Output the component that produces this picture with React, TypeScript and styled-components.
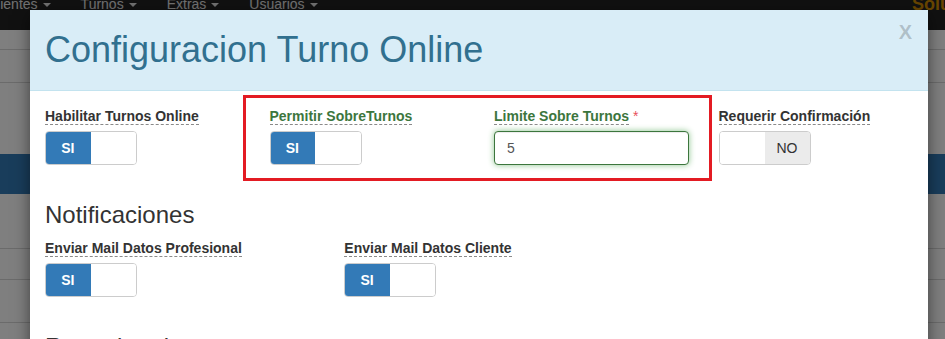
import React from "react";
import styled, { createGlobalStyle } from "styled-components";

const Global = createGlobalStyle`
  html, body { margin: 0; padding: 0; }
  body {
    width: 945px;
    height: 339px;
    overflow: hidden;
    background: #fff;
    font-family: "Liberation Sans", Arial, sans-serif;
    font-size: 14px;
    color: #333;
  }
  * { box-sizing: border-box; }
`;

const Stage = styled.div`
  position: relative;
  width: 945px;
  height: 339px;
  overflow: hidden;
`;

/* ---------- page beneath the modal ---------- */
const Navbar = styled.nav`
  display: flex;
  align-items: flex-start;
  height: 50px;
  margin-top: -20px;
  background: #222;
`;

const NavList = styled.ul`
  display: flex;
  list-style: none;
  margin: 0 0 0 -28px;
  padding: 0;
`;

const NavLink = styled.li`
  padding: 14px 15px 0;
  line-height: 20px;
  font-size: 14px;
  color: #e2e2e2;
  white-space: nowrap;
`;

const Caret = styled.span`
  display: inline-block;
  width: 0;
  height: 0;
  margin-left: 5px;
  vertical-align: middle;
  border-top: 4px solid;
  border-left: 4px solid transparent;
  border-right: 4px solid transparent;
`;

const Brand = styled.div`
  margin-left: auto;
  width: 33px;
  overflow: hidden;
  white-space: nowrap;
  padding-top: 14px;
  line-height: 20px;
  font-size: 18px;
  font-weight: 700;
  color: #d08a00;
`;

const Band = styled.div<{ $h: number; $bg?: string; $line?: boolean }>`
  height: ${(p) => p.$h}px;
  background: ${(p) => p.$bg ?? "#fff"};
  border-bottom: ${(p) => (p.$line ? "1px solid #d6d6d6" : "none")};
`;

const Backdrop = styled.div`
  position: absolute;
  inset: 0;
  background: rgba(0, 0, 0, 0.5);
`;

/* ---------- modal ---------- */
const Modal = styled.div`
  position: absolute;
  left: 30px;
  top: 10px;
  width: 898px;
  height: 400px;
  background: #fff;
  box-shadow: 0 5px 15px rgba(0, 0, 0, 0.5);
`;

const Header = styled.div`
  display: flex;
  justify-content: space-between;
  align-items: flex-start;
  padding: 20px 16px 20px 15px;
  background: #d9edf7;
  border-bottom: 1px solid #c3e3ef;
`;

const Title = styled.h1`
  margin: 0;
  font-size: 36px;
  line-height: 40px;
  font-weight: 400;
  color: #31708f;
`;

const Close = styled.span`
  margin-top: -8px;
  font-size: 20px;
  line-height: 21px;
  font-weight: 700;
  color: rgba(0, 0, 0, 0.2);
`;

const Body = styled.div`
  padding: 15px;
`;

const Row = styled.div<{ $cols: number }>`
  position: relative;
  display: grid;
  grid-template-columns: repeat(${(p) => p.$cols}, 1fr);
  margin: 0 -15px;
  padding-bottom: 15px;
`;

const Col = styled.div`
  padding: 0 15px;
`;

const Label = styled.label<{ $success?: boolean }>`
  display: block;
  margin-bottom: 5px;
  font-size: 14px;
  line-height: 20px;
  font-weight: 700;
  color: ${(p) => (p.$success ? "#3c763d" : "#333")};
`;

const Hint = styled.span`
  border-bottom: 1px dashed #8a8a8a;
`;

const Required = styled.span`
  color: #e8505b;
  font-weight: 400;
`;

const Toggle = styled.div`
  display: flex;
  width: 92px;
  height: 34px;
  border: 1px solid #ccc;
  border-radius: 4px;
  overflow: hidden;
`;

const ToggleHalf = styled.div<{ $kind: "on" | "off" | "handle" }>`
  flex: 1;
  display: flex;
  align-items: center;
  justify-content: center;
  font-size: 14px;
  font-weight: ${(p) => (p.$kind === "on" ? 700 : 400)};
  color: ${(p) => (p.$kind === "on" ? "#fff" : "#333")};
  background: ${(p) =>
    p.$kind === "on" ? "#337ab7" : p.$kind === "off" ? "#ebebeb" : "#fff"};
  ${(p) => (p.$kind === "on" ? "margin: -1px 0 -1px -1px;" : "")}
`;

const Input = styled.input`
  display: block;
  width: 100%;
  height: 34px;
  padding: 6px 12px;
  font-family: inherit;
  font-size: 14px;
  color: #555;
  background: #fff;
  border: 1px solid #3c763d;
  border-radius: 4px;
  outline: none;
  box-shadow: inset 0 1px 1px rgba(0, 0, 0, 0.075), 0 0 6px #8cc48d;
`;

const Section = styled.h3`
  margin: 22px 0 10px;
  font-size: 24px;
  line-height: 26.4px;
  font-weight: 400;
  color: #333;
`;

const Highlight = styled.div`
  position: absolute;
  left: 213px;
  top: -11px;
  width: 469px;
  height: 86px;
  border: 3px solid #e31b23;
  pointer-events: none;
`;

const Switch = ({ on }: { on: boolean }) => (
  <Toggle>
    {on ? (
      <>
        <ToggleHalf $kind="on">SI</ToggleHalf>
        <ToggleHalf $kind="handle" />
      </>
    ) : (
      <>
        <ToggleHalf $kind="handle" />
        <ToggleHalf $kind="off">NO</ToggleHalf>
      </>
    )}
  </Toggle>
);

export default function App() {
  return (
    <Stage>
      <Global />
      <Navbar>
        <NavList>
          {["Clientes", "Turnos", "Extras", "Usuarios"].map((t) => (
            <NavLink key={t}>
              {t}
              <Caret />
            </NavLink>
          ))}
        </NavList>
        <Brand>Soluciones</Brand>
      </Navbar>
      <Band $h={20} $line />
      <Band $h={33} $line />
      <Band $h={71} />
      <Band $h={40} $bg="#337ab7" />
      <Band $h={55} $line />
      <Band $h={31} $line />
      <Band $h={43} $line />
      <Backdrop />

      <Modal>
        <Header>
          <Title>Configuracion Turno Online</Title>
          <Close>X</Close>
        </Header>
        <Body>
          <Row $cols={4}>
            <Highlight />
            <Col>
              <Label>
                <Hint>Habilitar Turnos Online</Hint>
              </Label>
              <Switch on />
            </Col>
            <Col>
              <Label $success>
                <Hint>Permitir SobreTurnos</Hint>
              </Label>
              <Switch on />
            </Col>
            <Col>
              <Label $success>
                <Hint>Limite Sobre Turnos</Hint> <Required>*</Required>
              </Label>
              <Input defaultValue="5" />
            </Col>
            <Col>
              <Label>
                <Hint>Requerir Confirmación</Hint>
              </Label>
              <Switch on={false} />
            </Col>
          </Row>

          <Section>Notificaciones</Section>
          <Row $cols={3}>
            <Col>
              <Label>
                <Hint>Enviar Mail Datos Profesional</Hint>
              </Label>
              <Switch on />
            </Col>
            <Col>
              <Label>
                <Hint>Enviar Mail Datos Cliente</Hint>
              </Label>
              <Switch on />
            </Col>
          </Row>

          <Section>Recordatorios</Section>
        </Body>
      </Modal>
    </Stage>
  );
}
